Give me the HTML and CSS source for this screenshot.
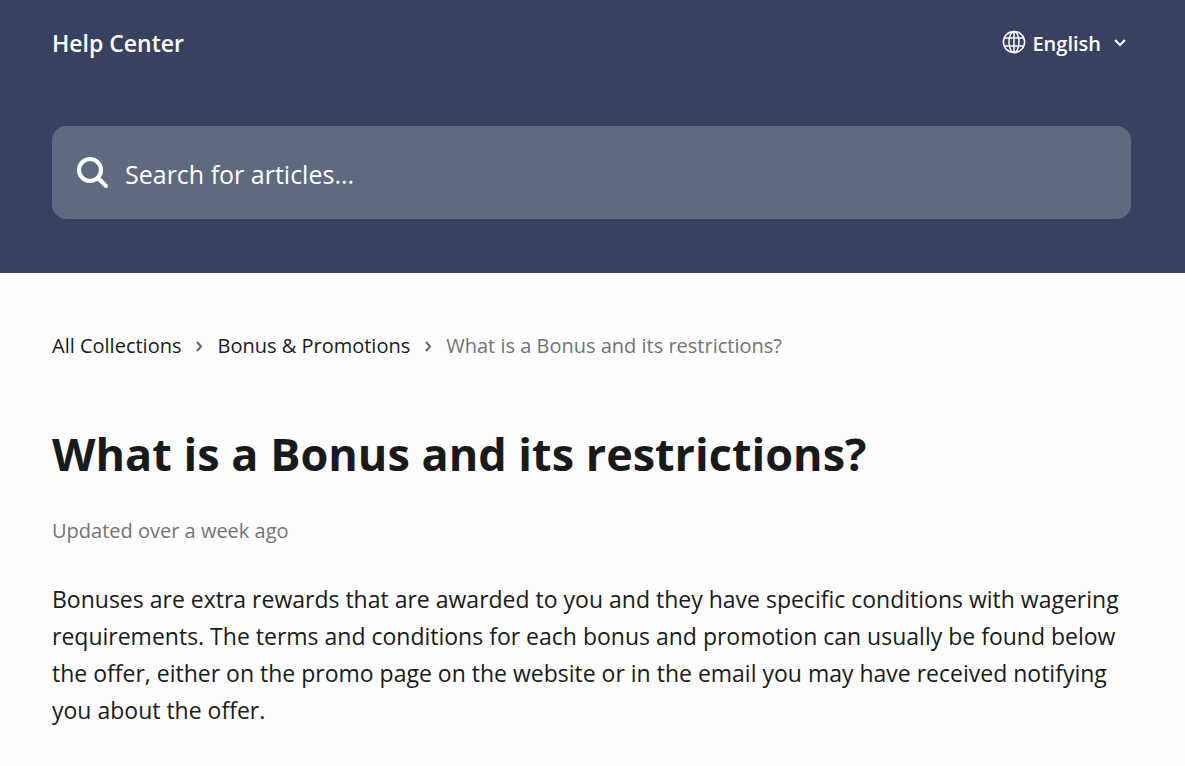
FILE: index.html
```html
<!DOCTYPE html>
<html lang="en">
<head>
    <meta charset="UTF-8">
    <meta name="viewport" content="width=device-width, initial-scale=1.0">
    <title>What is a Bonus and its restrictions? | Help Center</title>
    <link rel="stylesheet" href="styles.css">
</head>
<body>

<header class="header">
    <div class="header-top">
        <a class="brand" href="#">Help Center</a>
        <button type="button" class="language">
            <svg class="globe" viewBox="0 0 24 24" aria-hidden="true">
                <circle cx="12" cy="11" r="10.6"/>
                <ellipse cx="12" cy="11" rx="5" ry="10.6"/>
                <path d="M12 .4v21.2M2.5 7h19M2.5 15h19"/>
            </svg>
            <span>English</span>
            <svg class="chevron-down" viewBox="0 0 14 14" aria-hidden="true">
                <path d="M2 4l5 5 5-5"/>
            </svg>
        </button>
    </div>

    <!-- Search -->
    <form class="search" role="search">
        <svg class="search-icon" viewBox="0 0 32 32" aria-hidden="true">
            <circle cx="13" cy="13" r="11"/>
            <path d="M21 21l8 8" stroke-linecap="round"/>
        </svg>
        <input type="text" name="q" placeholder="Search for articles..." aria-label="Search for articles">
    </form>
</header>

<main class="content">
    <nav class="breadcrumb" aria-label="Breadcrumb">
        <a href="#">All Collections</a>
        <svg class="separator" viewBox="0 0 8 12" aria-hidden="true"><path d="M2 2l4 4.5-4 4.5"/></svg>
        <a href="#">Bonus &amp; Promotions</a>
        <svg class="separator" viewBox="0 0 8 12" aria-hidden="true"><path d="M2 2l4 4.5-4 4.5"/></svg>
        <span class="current">What is a Bonus and its restrictions?</span>
    </nav>

    <article>
        <h1>What is a Bonus and its restrictions?</h1>
        <p class="updated">Updated over a week ago</p>
        <p class="text">Bonuses are extra rewards that are awarded to you and they have specific conditions with wagering requirements. The terms and conditions for each bonus and promotion can usually be found below the offer, either on the promo page on the website or in the email you may have received notifying you about the offer.</p>
    </article>
</main>

</body>
</html>
```
FILE: styles.css
```css
* {
    box-sizing: border-box;
}
body {
    margin: 0;
    font-family: "Open Sans", "Noto Sans", sans-serif;
    background-color: #fdfdfd;
    color: #1a1a1a;
}
a {
    color: inherit;
    text-decoration: none;
}
.header {
    padding: 22px 54px 54px 52px;
    background-color: #394161;
    color: #fff;
}
.header-top {
    display: flex;
    justify-content: space-between;
    align-items: center;
    height: 42px;
    margin-bottom: 62px;
}
.brand {
    font-size: 23px;
    font-weight: 600;
}
.language {
    display: flex;
    align-items: center;
    gap: 6px;
    padding: 0 4px;
    border: none;
    background: none;
    color: inherit;
    font-family: inherit;
    font-size: 20px;
    font-weight: 600;
    cursor: pointer;
}
svg {
    flex: none;
    fill: none;
    stroke: currentColor;
}
.globe {
    width: 24px;
    height: 24px;
    stroke-width: 1.5;
    overflow: visible;
}
.chevron-down {
    width: 14px;
    height: 14px;
    margin-left: 6px;
    stroke-width: 2;
}
.search {
    display: flex;
    align-items: center;
    gap: 16px;
    height: 93px;
    padding: 0 24px;
    border: 1px solid #646c84;
    border-radius: 14px;
    background-color: #5f6980;
}
.search-icon {
    width: 32px;
    height: 32px;
    stroke-width: 4;
}
.search input {
    flex: 1;
    min-width: 0;
    padding: 2px 0 0;
    border: none;
    outline: none;
    background: none;
    color: #fff;
    font-family: inherit;
    font-size: 25px;
}
.search input::placeholder {
    color: #fff;
    opacity: 1;
}
.content {
    padding: 57px 52px;
}
.breadcrumb {
    display: flex;
    flex-wrap: wrap;
    align-items: center;
    gap: 14px;
    font-size: 20px;
    line-height: 32px;
}
.separator {
    width: 8px;
    height: 12px;
    stroke-width: 2;
    color: #666;
}
.current,
.updated {
    color: #737373;
}
h1 {
    margin: 59px 0 28px;
    font-size: 45px;
    line-height: 66px;
}
.updated {
    margin: 0 0 34px;
    font-size: 20px;
    line-height: 32px;
}
.text {
    margin: 0;
    font-size: 23px;
    line-height: 37px;
}
```
